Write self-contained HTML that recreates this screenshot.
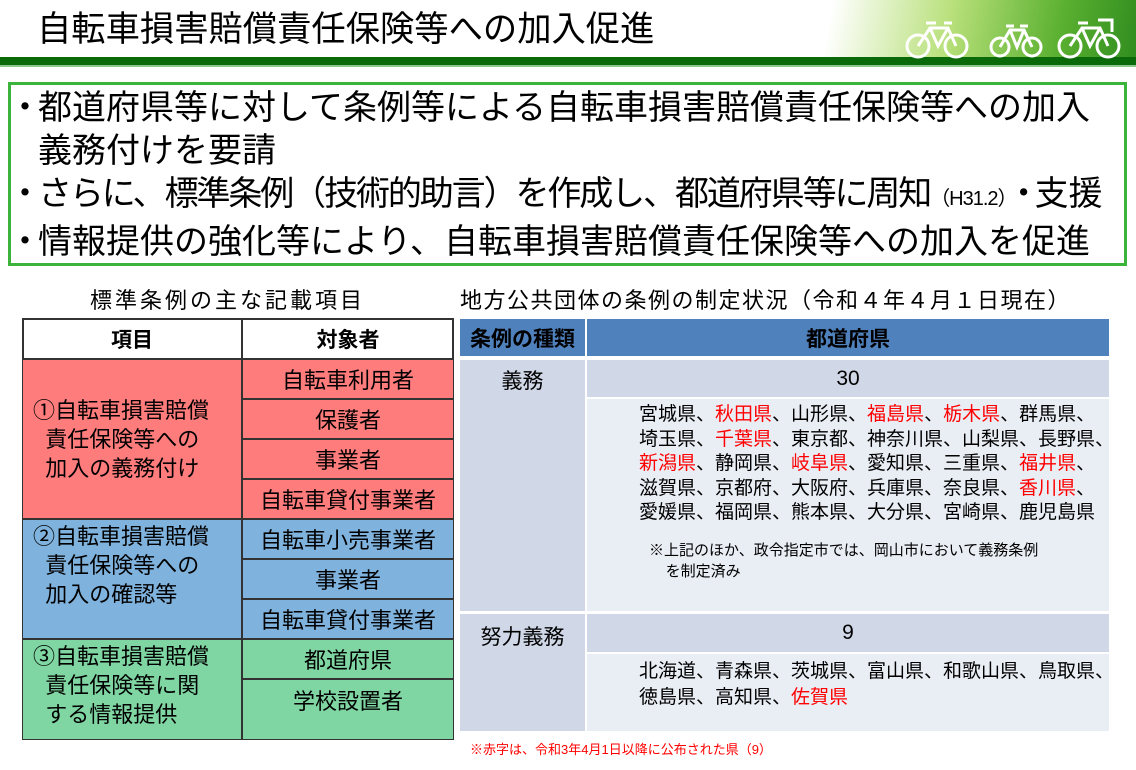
<!DOCTYPE html>
<html><head><meta charset="utf-8"><style>
body{margin:0;width:1136px;height:770px;background:#fff;position:relative;overflow:hidden;font-family:"Liberation Sans","Noto Sans CJK JP",sans-serif;color:#000}
.a{position:absolute;white-space:nowrap}
.c{position:absolute;display:flex;align-items:center;justify-content:center;box-sizing:border-box;text-align:center}
.b{display:inline-block;width:18px;overflow:visible}
.b i{position:relative;left:-12px;font-style:normal}
</style></head><body>
<div class="a" style="left:0;top:0;width:1136px;height:58px;background:linear-gradient(100deg,#fff 0,#fff 820px,#b8e07a 940px,#5ab030 1050px,#2d8a1e 1136px)"></div>
<div class="a" style="left:37px;top:8px;font-size:35px;line-height:44px;transform-origin:left;transform:scaleX(0.98)">自転車損害賠償責任保険等への加入促進</div>
<div class="a" style="left:0;top:57px;width:1136px;height:8px;background:#0a6a0a"></div>
<div class="a" style="left:0;top:65px;width:1136px;height:2px;background:#8cc88c"></div>
<svg class="a" style="left:900px;top:14px" width="232" height="46" viewBox="0 0 232 46" fill="none" stroke="#fff" stroke-width="3">
<circle cx="18" cy="32" r="11"/><circle cx="56" cy="32" r="11"/><path d="M18 32 L30 14 L48 14 L56 32 M30 14 L38 32 L48 14 M26 9h10 M44 9h8"/>
<circle cx="100" cy="33" r="9"/><circle cx="132" cy="33" r="9"/><path d="M100 33 L110 16 L124 16 L132 33 M110 16 L117 33 L124 16 M106 12h8 M120 12h8"/>
<circle cx="170" cy="32" r="11"/><circle cx="208" cy="32" r="11"/><path d="M170 32 L182 14 L200 14 L208 32 M182 14 L190 32 L200 14 M198 6h14 v12 M178 9h10"/>
</svg>
<div class="a" style="left:8px;top:82px;width:1113px;height:178px;border:3px solid #3cb43c"></div>
<div class="a" style="left:20px;top:87px;font-size:34px;line-height:43px"><span class="b"><i>・</i></span>都道府県等に対して条例等による自転車損害賠償責任保険等への加入<br><span class="b"></span>義務付けを要請<br><span class="b"><i>・</i></span><span style="letter-spacing:-2.1px">さらに、標準条例（技術的助言）を作成し、都道府県等に周知</span><span style="font-size:20px;letter-spacing:-1px">（H31.2）</span><span style="letter-spacing:-6px">・</span>支援<br><span class="b"><i>・</i></span>情報提供の強化等により、自転車損害賠償責任保険等への加入を促進</div>
<div class="a" style="left:90px;top:283px;font-size:22px;letter-spacing:3px">標準条例の主な記載項目</div>
<div class="a" style="left:460px;top:283px;font-size:22px;letter-spacing:1.5px">地方公共団体の条例の制定状況（令和４年４月１日現在）</div>
<div class="a" style="left:22px;top:318px;width:432px;height:422px;border:2px solid #333;box-sizing:border-box"></div>
<div class="c" style="left:22px;top:318px;width:220px;height:41px;border:1px solid #333;font-weight:bold;font-size:21px">項目</div>
<div class="c" style="left:242px;top:318px;width:212px;height:41px;border:1px solid #333;font-weight:bold;font-size:21px">対象者</div>
<div class="a" style="left:22px;top:359px;width:220px;height:160px;background:#ff7c7c;border:1px solid #333;box-sizing:border-box;font-size:22px;line-height:29px;padding:36px 0 0 10px">①自転車損害賠償<br>&nbsp;&nbsp;責任保険等への<br>&nbsp;&nbsp;加入の義務付け</div>
<div class="a" style="left:22px;top:519px;width:220px;height:120px;background:#7fb2dc;border:1px solid #333;box-sizing:border-box;font-size:22px;line-height:29px;padding:2px 0 0 10px">②自転車損害賠償<br>&nbsp;&nbsp;責任保険等への<br>&nbsp;&nbsp;加入の確認等</div>
<div class="a" style="left:22px;top:639px;width:220px;height:101px;background:#7fd6a2;border:1px solid #333;box-sizing:border-box;font-size:22px;line-height:29px;padding:2px 0 0 10px">③自転車損害賠償<br>&nbsp;&nbsp;責任保険等に関<br>&nbsp;&nbsp;する情報提供</div>
<div class="c" style="left:242px;top:359px;width:212px;height:40px;background:#ff7c7c;border:1px solid #333;font-size:22px">自転車利用者</div>
<div class="c" style="left:242px;top:399px;width:212px;height:40px;background:#ff7c7c;border:1px solid #333;font-size:22px">保護者</div>
<div class="c" style="left:242px;top:439px;width:212px;height:40px;background:#ff7c7c;border:1px solid #333;font-size:22px">事業者</div>
<div class="c" style="left:242px;top:479px;width:212px;height:40px;background:#ff7c7c;border:1px solid #333;font-size:22px">自転車貸付事業者</div>
<div class="c" style="left:242px;top:519px;width:212px;height:40px;background:#7fb2dc;border:1px solid #333;font-size:22px">自転車小売事業者</div>
<div class="c" style="left:242px;top:559px;width:212px;height:40px;background:#7fb2dc;border:1px solid #333;font-size:22px">事業者</div>
<div class="c" style="left:242px;top:599px;width:212px;height:40px;background:#7fb2dc;border:1px solid #333;font-size:22px">自転車貸付事業者</div>
<div class="c" style="left:242px;top:639px;width:212px;height:40px;background:#7fd6a2;border:1px solid #333;font-size:22px">都道府県</div>
<div class="a" style="left:242px;top:679px;width:212px;height:61px;background:#7fd6a2;border:1px solid #333;box-sizing:border-box;font-size:22px;text-align:center;padding-top:4px">学校設置者</div>
<div class="c" style="left:460px;top:319px;width:125px;height:37px;background:#4f81bd;font-weight:bold;font-size:21px">条例の種類</div>
<div class="c" style="left:587px;top:319px;width:522px;height:37px;background:#4f81bd;font-weight:bold;font-size:21px">都道府県</div>
<div class="a" style="left:460px;top:360px;width:125px;height:251px;background:#d0d8e8;font-size:21px;text-align:center;padding-top:5px;box-sizing:border-box">義務</div>
<div class="c" style="left:587px;top:360px;width:522px;height:37px;background:#d0d8e8;font-size:21px">30</div>
<div class="a" style="left:587px;top:399px;width:522px;height:212px;background:#e9edf4;box-sizing:border-box;padding:4px 0 0 52px;font-size:19px;line-height:24.5px">宮城県、<span style="color:#f00">秋田県</span>、山形県、<span style="color:#f00">福島県</span>、<span style="color:#f00">栃木県</span>、群馬県、<br>埼玉県、<span style="color:#f00">千葉県</span>、東京都、神奈川県、山梨県、長野県、<br><span style="color:#f00">新潟県</span>、静岡県、<span style="color:#f00">岐阜県</span>、愛知県、三重県、<span style="color:#f00">福井県</span>、<br>滋賀県、京都府、大阪府、兵庫県、奈良県、<span style="color:#f00">香川県</span>、<br>愛媛県、福岡県、熊本県、大分県、宮崎県、鹿児島県<div style="font-size:15px;line-height:21px;margin:14px 0 0 10px">※上記のほか、政令指定市では、岡山市において義務条例<br>&nbsp;&nbsp;&nbsp;&nbsp;を制定済み</div></div>
<div class="a" style="left:460px;top:614px;width:125px;height:117px;background:#d0d8e8;font-size:21px;text-align:center;padding-top:7px;box-sizing:border-box">努力義務</div>
<div class="c" style="left:587px;top:614px;width:522px;height:38px;background:#d0d8e8;font-size:21px">9</div>
<div class="a" style="left:587px;top:654px;width:522px;height:77px;background:#e9edf4;box-sizing:border-box;padding:5px 0 0 52px;font-size:19px;line-height:26px">北海道、青森県、茨城県、富山県、和歌山県、鳥取県、<br>徳島県、高知県、<span style="color:#f00">佐賀県</span></div>
<div class="a" style="left:470px;top:739px;font-size:13px;color:#f00">※赤字は、令和3年4月1日以降に公布された県（9）</div>
</body></html>
